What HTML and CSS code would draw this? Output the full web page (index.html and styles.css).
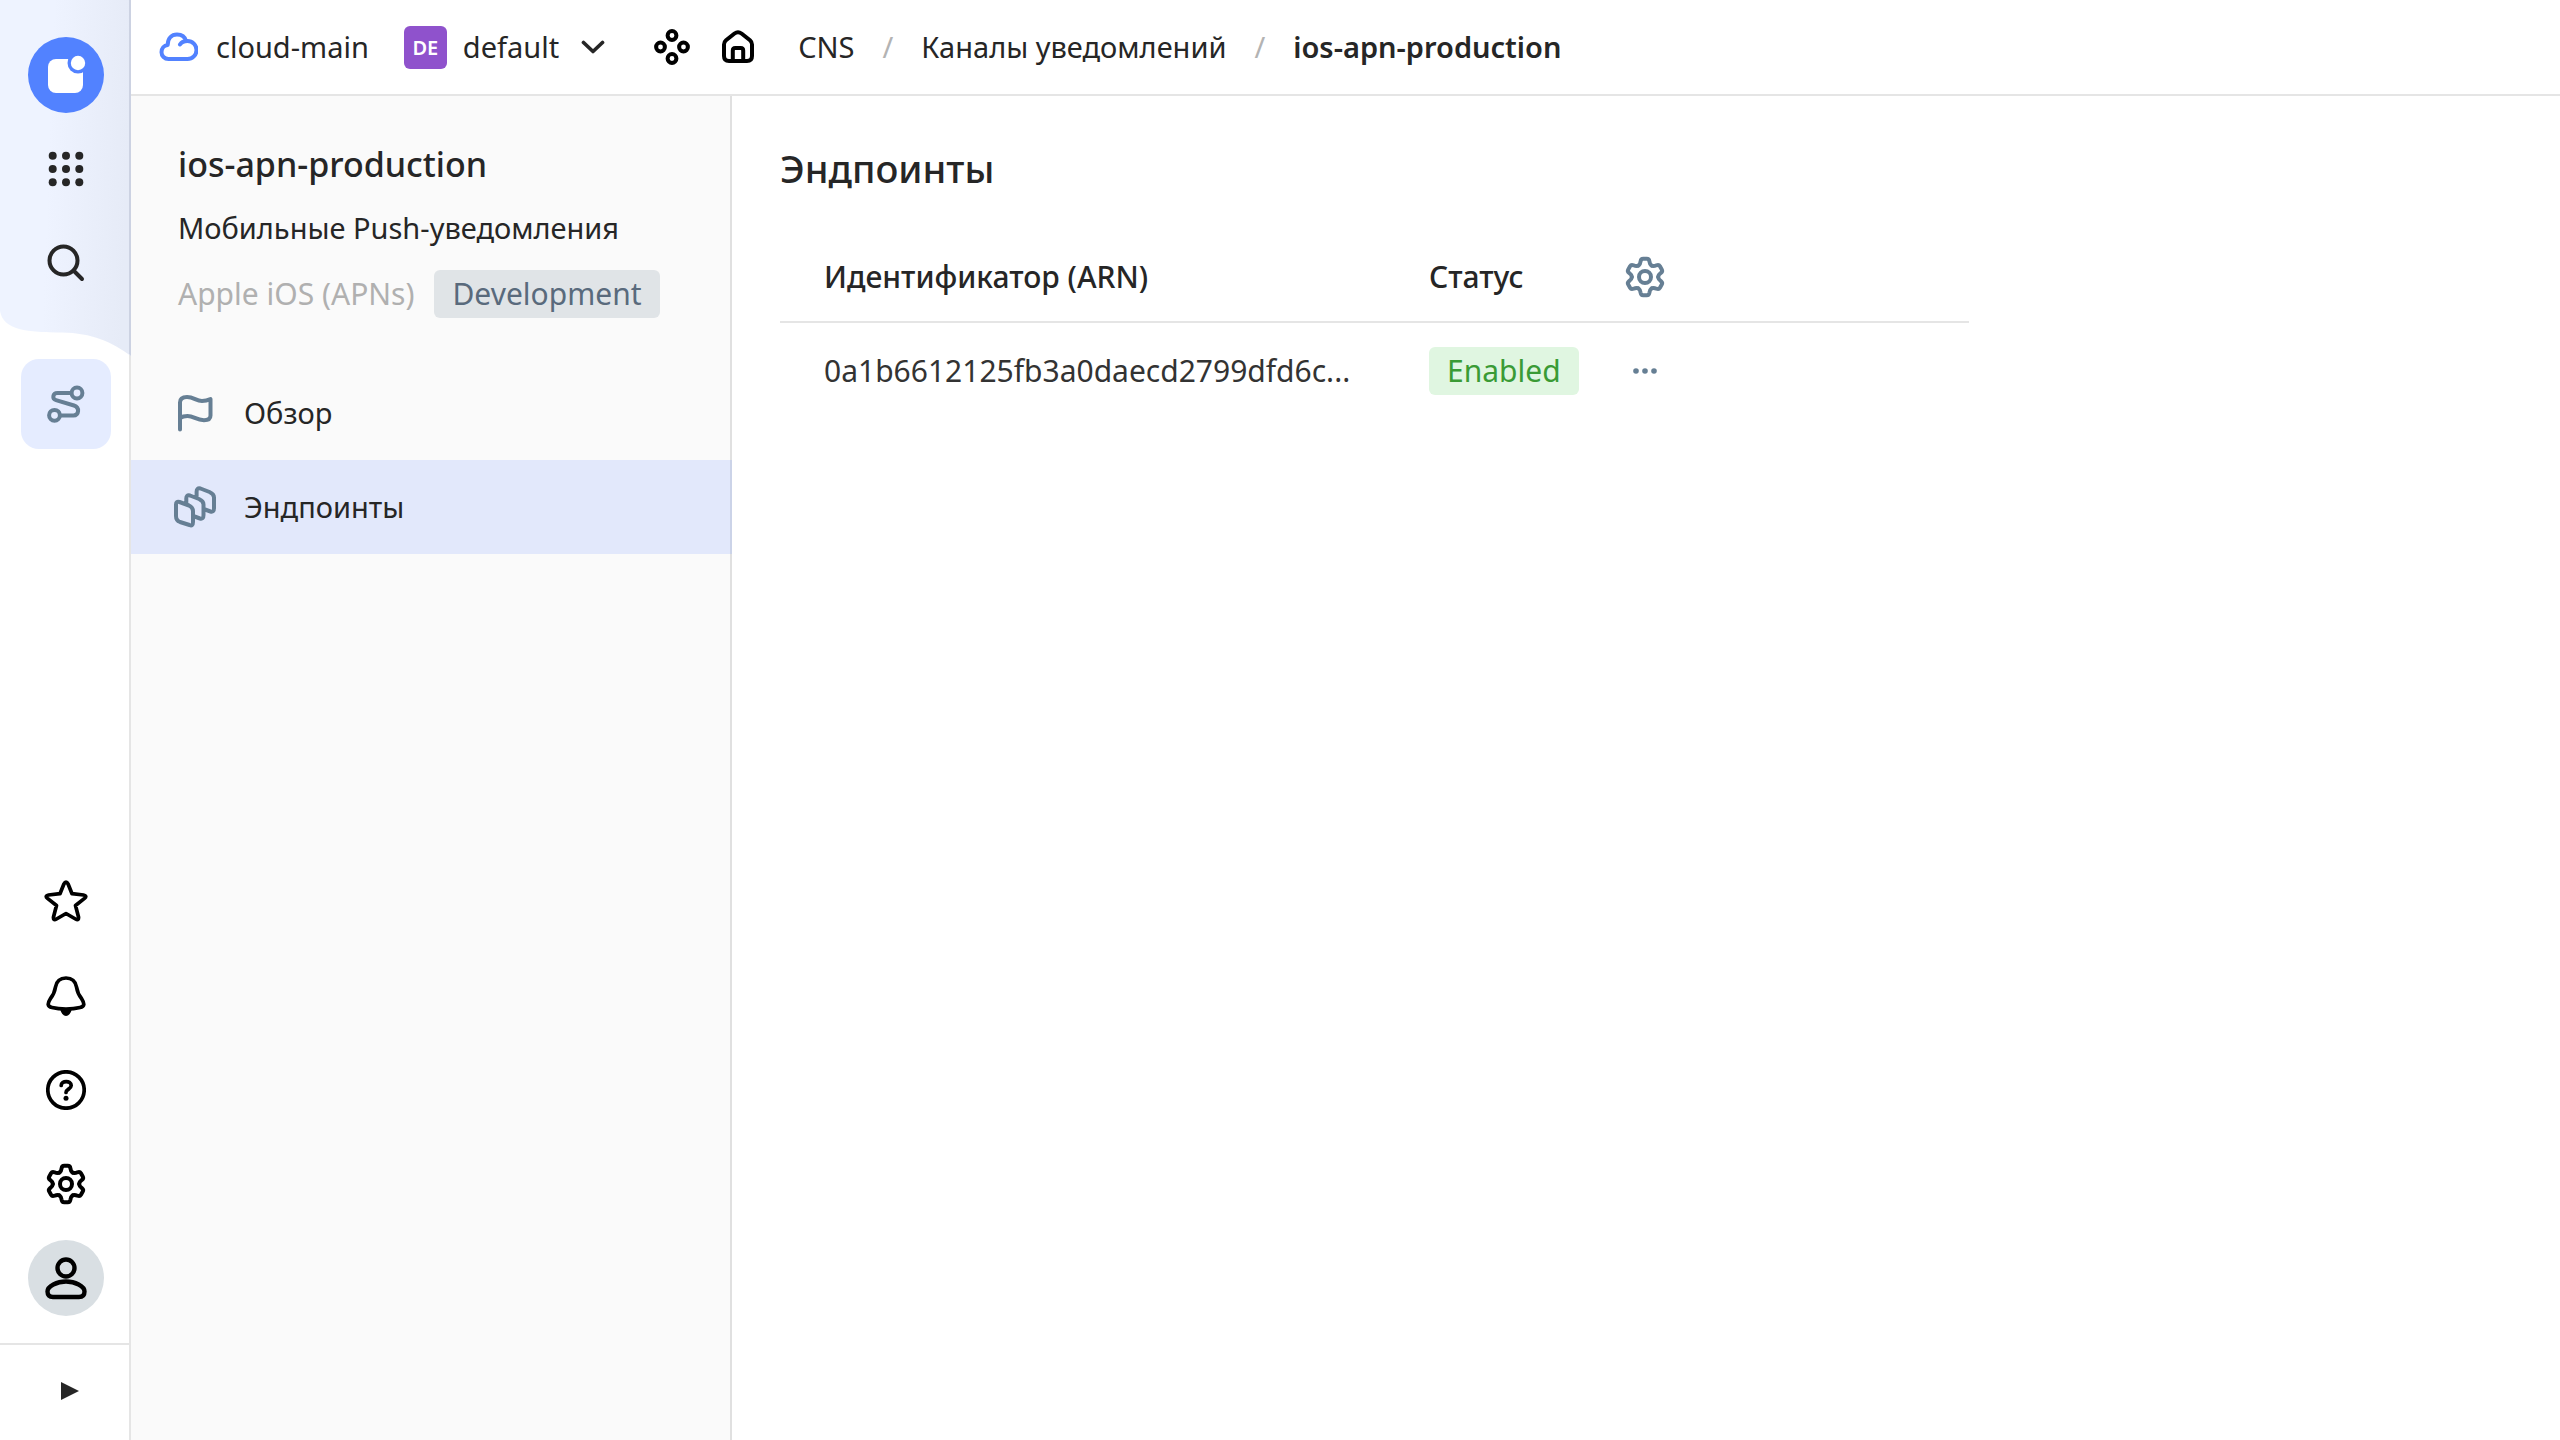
FILE: index.html
```html
<!DOCTYPE html>
<html lang="ru">
<head>
<meta charset="utf-8">
<meta name="viewport" content="width=device-width, initial-scale=1">
<title>ios-apn-production — Эндпоинты</title>
<link rel="stylesheet" href="styles.css">
</head>
<body>
<svg class="defs" aria-hidden="true">
  <defs>
    <path id="tooth" d="M-6.6 -11.4C-4.8 -12.5 -4.6 -14 -4.400 -15.800Q-4 -18.300 -1.800 -18.300H1.800Q4 -18.300 4.400 -15.800C4.600 -14 4.800 -12.500 6.600 -11.400"/>
    <symbol id="gear" viewBox="-22 -22 44 44">
      <use href="#tooth"/><use href="#tooth" transform="rotate(60)"/><use href="#tooth" transform="rotate(120)"/>
      <use href="#tooth" transform="rotate(180)"/><use href="#tooth" transform="rotate(240)"/><use href="#tooth" transform="rotate(300)"/>
      <circle r="6"/>
    </symbol>
  </defs>
</svg>
<div class="app">
  <aside class="rail">
    <svg class="rail-bg" viewBox="0 0 131 357" aria-hidden="true">
      <defs><linearGradient id="rail-fill" x1="0" x2="1" y1="0.1" y2="0.2"><stop offset="0.4" stop-color="#eef3ff"/><stop offset="1" stop-color="#e6ebf7"/></linearGradient></defs>
      <path fill="url(#rail-fill)" d="M0 0H131V356C112 342 92 333 62 332.500C28 332.500 3 330 0 311Z"/>
      <path fill="#ccd2e2" d="M129 0H131V356L129 354Z"/>
    </svg>
    <nav class="rail-group" aria-label="Сервисы">
      <a class="rail-item" href="#" aria-label="Главная">
        <svg width="76" height="76" viewBox="0 0 76 76"><circle cx="38" cy="38" r="38" fill="#5282ff"/><rect x="20" y="22" width="35" height="34" rx="8" fill="#fff"/><circle cx="50" cy="26" r="10.5" fill="#5282ff"/><circle cx="50" cy="26" r="7.2" fill="#fff"/></svg>
      </a>
      <button class="rail-item" type="button" aria-label="Все сервисы">
        <svg width="40" height="40" viewBox="0 0 40 40" fill="#262626"><circle cx="6.7" cy="6.7" r="4"/><circle cx="20" cy="6.7" r="4"/><circle cx="33.3" cy="6.7" r="4"/><circle cx="6.7" cy="20" r="4"/><circle cx="20" cy="20" r="4"/><circle cx="33.3" cy="20" r="4"/><circle cx="6.7" cy="33.3" r="4"/><circle cx="20" cy="33.3" r="4"/><circle cx="33.3" cy="33.3" r="4"/></svg>
      </button>
      <button class="rail-item" type="button" aria-label="Поиск">
        <svg class="line dark" width="40" height="40" viewBox="0 0 40 40"><circle cx="17.5" cy="17.5" r="14"/><path d="M28 28L36 36"/></svg>
      </button>
    </nav>
    <nav class="rail-group service" aria-label="Текущий сервис">
      <a class="rail-item" href="#" aria-label="CNS"><span class="rail-active">
        <svg class="line slate" width="40" height="40" viewBox="0 0 40 40"><circle cx="31" cy="9" r="5.4"/><circle cx="8.5" cy="31.3" r="5.4"/><path d="M25 9H11.5C6.5 9 6 15 10 16.2L28 21.5C34 23.5 33 31.5 27.5 31.5H14.5"/></svg>
      </span></a>
    </nav>
    <div class="rail-group rail-bottom">
      <button class="rail-item" type="button" aria-label="Избранное">
        <svg class="line thin" width="44" height="44" viewBox="0 0 44 44"><path d="M19.8 4.2Q22 0 24.2 4.2L28 13.7L39.5 15Q43.5 15.8 40.5 18.4L31.5 25.5L34.5 37Q35 41 31.5 39L22 33.5L12.5 39Q9 41 9.5 37L12.5 25.5L3.5 18.4Q.5 15.8 4.5 15L16 13.7Z"/></svg>
      </button>
      <button class="rail-item" type="button" aria-label="Уведомления">
        <svg class="line thin" width="40" height="42" viewBox="0 0 40 42"><path d="M20 3C13.5 3 10.5 6.5 9.5 12C8.5 18 7 20.5 4.5 23.5C1 29 1.5 31.5 6 32.5C10 33.5 15 34 20 34C25 34 30 33.5 34 32.5C38.5 31.5 39 29 35.5 23.5C33 20.5 31.5 18 30.5 12C29.5 6.5 26.5 3 20 3Z"/><path class="solid" d="M14 34H26Q24 41 20 41Q16 41 14 34Z"/></svg>
      </button>
      <button class="rail-item" type="button" aria-label="Справка">
        <svg class="line thin" width="40" height="40" viewBox="0 0 40 40"><circle cx="20" cy="20" r="18.2"/><path d="M15.200 15.500C15.200 10.200 25.200 10.200 25.200 15.500C25.200 19 20 19.200 20 22.500"/><circle class="solid" cx="20" cy="28.200" r="2.500"/></svg>
      </button>
      <button class="rail-item" type="button" aria-label="Настройки">
        <svg class="line" width="44" height="44"><use href="#gear"/></svg>
      </button>
      <button class="rail-item" type="button" aria-label="Профиль"><span class="avatar">
        <svg class="line thick" width="44" height="44" viewBox="0 0 44 44"><circle cx="22" cy="12" r="8.5"/><path d="M22 25.5C31 25.5 40.5 30 40.5 35.5Q40.5 41 35 41H9Q3.5 41 3.5 35.5C3.5 30 13 25.5 22 25.5Z"/></svg>
      </span></button>
    </div>
    <button class="rail-toggle" type="button" aria-label="Развернуть">
      <svg width="18" height="18" viewBox="0 0 18 18"><path fill="#262626" d="M0 0L18 9L0 18Z"/></svg>
    </button>
  </aside>

  <div class="workspace">
    <header class="topbar">
      <a class="cloud" href="#">
        <svg class="line" width="40" height="32" viewBox="0 0 40 32"><path d="M22 13.5C23.5 11 26.5 10 29.5 10A9 9 0 0 1 29.5 28H10.5C6.5 28 3.5 25 3.5 21.2C3.5 17.5 6 14.5 9.7 14C9.7 7.5 13.5 3.5 19 3.5C23.5 3.5 27 6 28 10"/></svg>
        cloud-main
      </a>
      <button class="folder" type="button">
        <span class="folder-mark">DE</span>
        default
        <svg class="line thin dark" width="24" height="14" viewBox="0 0 24 14"><path d="M2.500 2.500L12 11.500L21.500 2.500"/></svg>
      </button>
      <div class="shortcuts">
        <button type="button" aria-label="Ресурсы"><svg class="line" width="36" height="36" viewBox="0 0 36 36"><circle cx="18" cy="6.500" r="4.400"/><circle cx="6.500" cy="18" r="4.400"/><circle cx="29.500" cy="18" r="4.400"/><circle cx="18" cy="29.500" r="4.400"/></svg></button>
        <a href="#" aria-label="Домой"><svg class="line" width="32" height="34" viewBox="0 0 32 34"><path d="M2 14.500Q2 12 4 10.300L12.500 3.500Q16 .9 19.500 3.500L28 10.300Q30 12 30 14.500V26Q30 31 25 31H7Q2 31 2 26ZM10.800 31V20.500Q10.800 18 13.300 18H18.700Q21.200 18 21.200 20.500V31"/></svg></a>
      </div>
      <nav class="crumbs" aria-label="Навигация">
        <a href="#">CNS</a><span class="slash">/</span><a href="#">Каналы уведомлений</a><span class="slash">/</span><span class="current">ios-apn-production</span>
      </nav>
    </header>

    <div class="columns">
      <aside class="sidebar">
        <div class="channel">
          <h2>ios-apn-production</h2>
          <p class="kind">Мобильные Push-уведомления</p>
          <p class="platform">Apple iOS (APNs) <span class="tag neutral">Development</span></p>
        </div>
        <nav class="menu" aria-label="Разделы">
          <a href="#"><svg class="line slate" width="42" height="42" viewBox="-3 -2 42 42"><path d="M3 35.5V8.5C3 4.5 6 3 10 3C17 3 19 7 25 7C29 7 31 6.2 33.5 5V21.5C33.5 25 31 26.2 27 26.2C19 26.2 17 22 10.5 22C7 22 5 22.7 3 24"/></svg>Обзор</a>
          <a class="active" href="#" aria-current="page"><svg class="line slate" width="42" height="42" viewBox="0 0 42 42"><path d="M2 18.5Q2 15 5.5 16L15 19.5Q19 21.5 19 25V36Q19 40.5 15.5 39L6 36Q2 34.5 2 30ZM12.3 17V13Q12 8.5 16 9.5L25 13Q29.5 15 29.5 18.5V29Q29.5 33.5 26 32.5L20.5 30.5M22.6 10.5V6Q22.5 1.5 26.5 2.5L35.5 6Q40 8 40 11.5V22Q40 26.5 36.5 25.5L31 23.5"/></svg>Эндпоинты</a>
        </nav>
      </aside>
      <main>
        <h1>Эндпоинты</h1>
        <table>
          <colgroup><col class="col-id"><col class="col-status"><col class="col-actions"></colgroup>
          <thead>
            <tr><th scope="col">Идентификатор (ARN)</th><th scope="col">Статус</th><th scope="col"><button type="button" aria-label="Настроить таблицу"><svg class="line slate" width="44" height="44"><use href="#gear"/></svg></button></th></tr>
          </thead>
          <tbody>
            <tr><td>0a1b6612125fb3a0daecd2799dfd6c...</td><td><span class="tag success">Enabled</span></td><td><button type="button" aria-label="Действия"><svg class="dots" width="44" height="10" viewBox="0 0 44 10"><circle cx="13" cy="5" r="2.800"/><circle cx="22" cy="5" r="2.800"/><circle cx="31" cy="5" r="2.800"/></svg></button></td></tr>
          </tbody>
        </table>
      </main>
    </div>
  </div>
</div>
</body>
</html>
```
FILE: styles.css
```css
* { box-sizing: border-box; }

body {
  margin: 0;
  font: 400 30px/40px "Noto Sans", "Open Sans", sans-serif;
  color: #262626;
  background: #fff;
}

h1, h2, p { margin: 0; }
a { color: inherit; text-decoration: none; }
button {
  padding: 0;
  border: 0;
  background: none;
  color: inherit;
  font: inherit;
  cursor: pointer;
}
svg { display: block; flex: none; }
.defs { position: absolute; width: 0; height: 0; }

/* Outline icons */
.line {
  fill: none;
  stroke: #000;
  stroke-width: 4;
  stroke-linecap: round;
  stroke-linejoin: round;
}
.line.thin { stroke-width: 3.7; }
.line.thick { stroke-width: 4.4; }
.line.dark { stroke: #262626; }
.line.slate { stroke: #667f94; }
.solid { fill: #000; stroke: none; }
.dots { fill: #667f94; }

.app { display: flex; min-height: 100vh; }

/* Left rail */
.rail {
  position: relative;
  display: flex;
  flex-direction: column;
  flex: none;
  width: 131px;
  padding-top: 28px;
  border-right: 2px solid #e5e5e5;
}
.rail-bg { position: absolute; top: 0; left: 0; width: 131px; }
.rail-group { position: relative; display: flex; flex-direction: column; }
.rail-item {
  display: flex;
  align-items: center;
  justify-content: center;
  height: 94px;
  padding-left: 2px;
}
.service { margin-top: 47px; }
.rail-active {
  display: grid;
  place-items: center;
  width: 90px;
  height: 90px;
  border-radius: 18px;
  background: #e5ecff;
}
.rail-bottom { margin-top: auto; padding-bottom: 18px; }
.avatar {
  display: grid;
  place-items: center;
  width: 76px;
  height: 76px;
  border-radius: 50%;
  background: #d9dfe3;
}
.rail-toggle {
  display: flex;
  align-items: center;
  justify-content: center;
  height: 97px;
  padding: 0 0 4px 10px;
  border-top: 2px solid #e5e5e5;
}

/* Top bar */
.workspace { display: flex; flex: 1; flex-direction: column; min-width: 0; }
.topbar {
  display: flex;
  align-items: center;
  height: 96px;
  padding-left: 27px;
  border-bottom: 2px solid #e5e5e5;
  font-size: 29px;
}
.cloud { display: flex; align-items: center; gap: 18px; margin-right: 35px; }
.cloud .line { stroke: #5282ff; }
.folder { display: flex; align-items: center; gap: 16px; margin-right: 49px; }
.folder .line { margin-left: 6px; }
.folder-mark {
  width: 43px;
  height: 43px;
  border-radius: 6px;
  background: #8f52cc;
  color: #fff;
  font-size: 20px;
  font-weight: 600;
  line-height: 43px;
  text-align: center;
}
.shortcuts { display: flex; align-items: center; gap: 32px; margin-right: 44px; }
.crumbs { display: flex; align-items: center; }
.slash { margin: 0 28px; color: #b3b3b3; }
.current { font-weight: 600; }

/* Sidebar */
.columns { display: flex; flex: 1; }
.sidebar {
  flex: none;
  width: 601px;
  border-right: 2px solid #e0e0e0;
  background: #fafafa;
}
.channel { padding: 44px 46px 48px 47px; }
.channel h2 { font-size: 34px; font-weight: 500; line-height: 48px; }
.kind { margin: 20px 0 22px; font-size: 29px; }
.platform { display: flex; align-items: center; gap: 20px; color: #b0b0b0; }
.tag {
  display: inline-block;
  padding: 0 18px;
  border-radius: 6px;
  line-height: 48px;
}
.neutral { background: #e0e4e7; color: #596a7c; }
.success { background: #e0f6e1; color: #3a9b35; }
.menu a {
  display: flex;
  align-items: center;
  gap: 28px;
  height: 94px;
  padding-left: 43px;
  font-size: 29px;
}
.menu .active { margin-right: -2px; background: linear-gradient(to left, #cbd3e8 2px, #e2e8fb 2px); }

/* Endpoint list */
main { flex: 1; min-width: 0; padding: 48px; }
h1 { margin-bottom: 38px; font-size: 38px; font-weight: 500; line-height: 48px; }
table { table-layout: fixed; width: 1189px; max-width: 100%; border-collapse: collapse; }
.col-id { width: 649px; }
.col-status { width: 194px; }
th, td { padding: 0; text-align: left; vertical-align: middle; white-space: nowrap; }
th { height: 92px; padding-top: 2px; border-bottom: 2px solid #e5e5e5; font-weight: 500; }
td { height: 96px; }
th:first-child, td:first-child { padding-left: 44px; }
td:first-child { color: #333; }
table button { display: block; }
```
